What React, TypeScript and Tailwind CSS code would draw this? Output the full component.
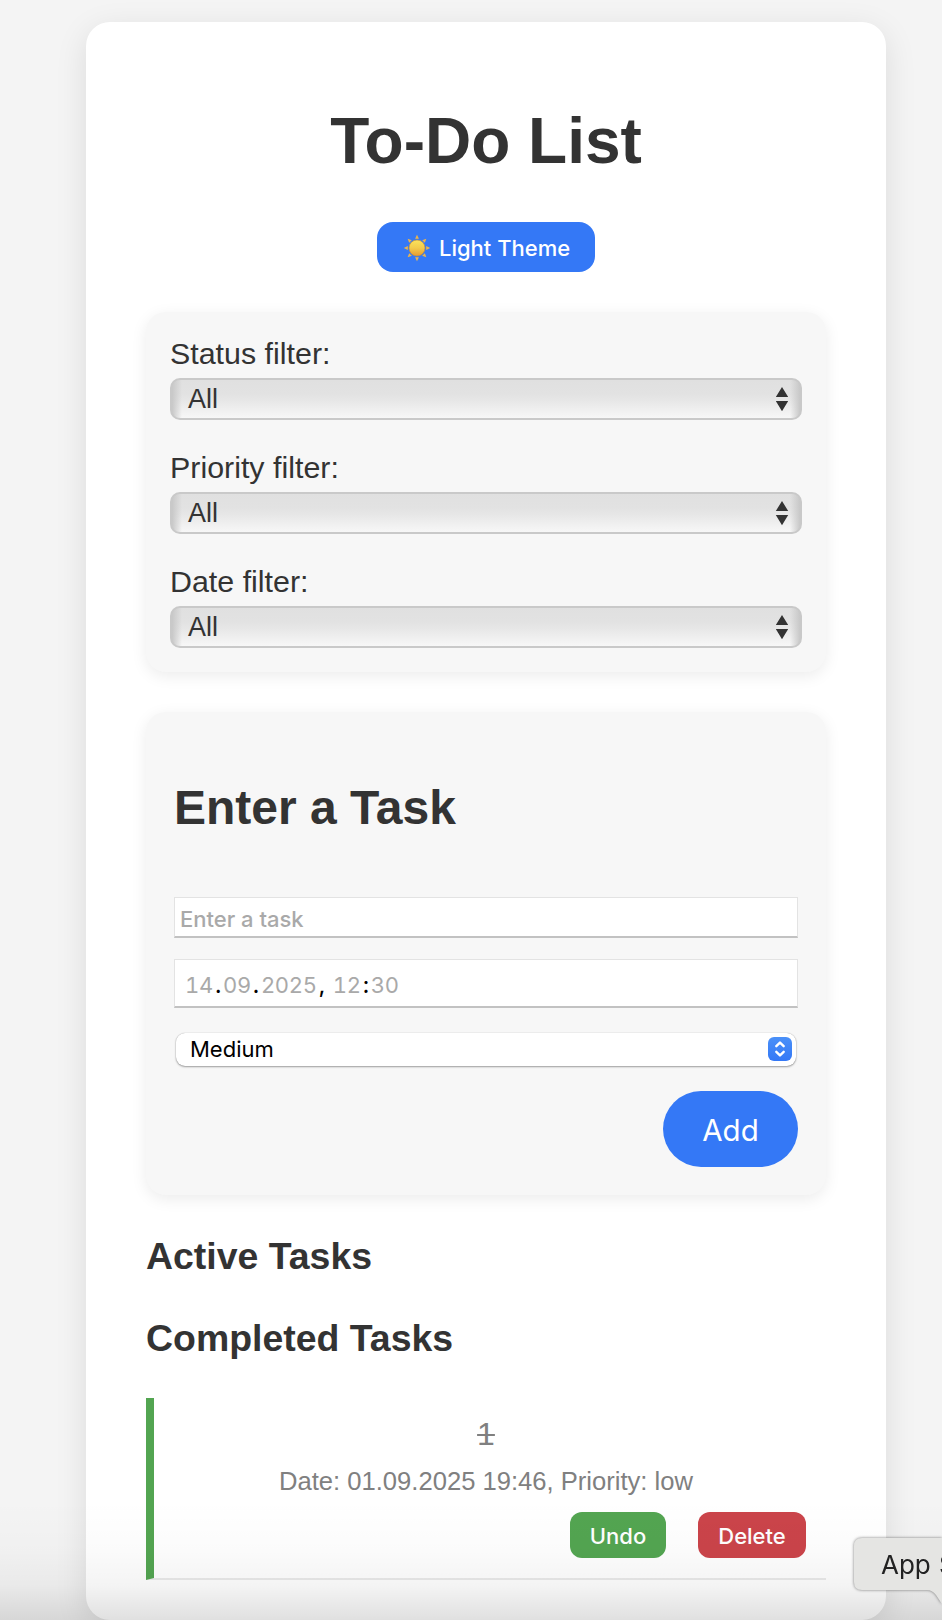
import React from "react";

const sans = "font-['Liberation_Sans',Arial,sans-serif]";
const ui = "font-['Inter',sans-serif]";

function Sun() {
  const rays = [0, 45, 90, 135, 180, 225, 270, 315];
  return (
    <svg className="mt-[2px] h-[28px] w-[28px]" viewBox="-14 -14 28 28">
      <defs>
        <linearGradient id="disc" x1="0" y1="0" x2="0" y2="1">
          <stop offset="0" stopColor="#fbe35c" />
          <stop offset="0.5" stopColor="#f3cb4b" />
          <stop offset="1" stopColor="#e69a32" />
        </linearGradient>
      </defs>
      {rays.map((a) => (
        <path key={a} d="M-1.9 -9.2L0 -13.2L1.9 -9.2Z" fill="#ecb44c" transform={`rotate(${a})`} />
      ))}
      <circle r="8" fill="url(#disc)" stroke="#c99136" strokeWidth="0.7" />
    </svg>
  );
}

function Filter({ label }: { label: string }) {
  return (
    <div>
      <div className="mb-[6px] h-[36px] text-[30.4px] leading-[34px]">{label}</div>
      <div className="flex h-[42px] items-center justify-between overflow-hidden rounded-[10px] border-2 border-[#c9c9c9] bg-[linear-gradient(90deg,#c8c8c8_0,#c8c8c800_10px,#c8c8c800_calc(100%-10px),#c8c8c8_100%),linear-gradient(180deg,#e0e0e0,#e2e2e2_35%,#e6e6e6_52%,#f7f7f7)] pr-[11px] pl-[16px] text-[27px] leading-[38px]">
        <span>All</span>
        <svg className="h-[26px] w-[14px]" viewBox="0 0 14 26" fill="#333">
          <path d="M7 1L13.2 11H0.8ZM7 25.2L0.8 15H13.2Z" />
        </svg>
      </div>
    </div>
  );
}

function Mark({ children }: { children: string }) {
  return <span className="inline-block w-[10px] text-center font-medium text-black">{children}</span>;
}

export default function App() {
  return (
    <div className={`${sans} relative h-[1620px] w-[942px] overflow-hidden bg-[#f4f4f4] pt-[22px] pl-[86px] text-[#333]`}>
      <main className="h-[1598px] w-[800px] rounded-[24px] bg-white px-[60px] pt-[82px] shadow-[0_8px_32px_rgba(0,0,0,0.1)]">
        <h1 className="h-[74px] text-center text-[64px] leading-[74px] font-bold">To-Do List</h1>

        <button className={`${ui} mx-auto mt-[44px] flex h-[50px] w-[218px] items-center rounded-[16px] bg-[#3478f6] pl-[26px] text-[22px] font-medium text-white`}>
          <Sun />
          <span className="ml-[8px] pt-[2px] whitespace-nowrap">Light Theme</span>
        </button>

        <section className="mt-[40px] flex h-[360px] flex-col gap-[30px] rounded-[20px] bg-[#f7f7f7] p-[24px] shadow-[0_4px_16px_rgba(0,0,0,0.08)]">
          <Filter label="Status filter:" />
          <Filter label="Priority filter:" />
          <Filter label="Date filter:" />
        </section>

        <section className="mt-[40px] flex h-[483px] flex-col rounded-[20px] bg-[#f7f7f7] px-[28px] pt-[69px] shadow-[0_4px_16px_rgba(0,0,0,0.08)]">
          <h2 className="h-[54px] text-[48px] leading-[54px] font-bold">Enter a Task</h2>
          <div className={`${ui} mt-[62px] flex h-[41px] items-center border border-b-2 border-[#e3e3e3] border-b-[#c2c2c2] bg-white pt-[4px] pl-[5px] text-[22px] font-medium text-[#a9a9a9]`}>
            <span>Enter a task</span>
          </div>
          <div className={`${ui} mt-[21px] flex h-[49px] items-center border border-b-2 border-[#e3e3e3] border-b-[#c2c2c2] bg-white pt-[5px] pl-[10px] text-[22px] tracking-[-0.3px] text-[#a9a9a9] tabular-nums`}>
            <span>14</span>
            <Mark>.</Mark>
            <span>09</span>
            <Mark>.</Mark>
            <span>2025</span>
            <Mark>,</Mark>
            <span className="ml-[6px]">12</span>
            <Mark>:</Mark>
            <span>30</span>
          </div>
          <div className={`${ui} mx-[2px] mt-[25px] flex h-[33px] items-center justify-between rounded-[9px] bg-white pr-[4px] pb-px pl-[14px] text-[22px] text-black shadow-[0_0_1px_rgba(0,0,0,0.3),0_1px_2px_rgba(0,0,0,0.35)]`}>
            <span className="pt-px">Medium</span>
            <svg className="h-[24px] w-[24px] rounded-[6px] bg-linear-to-b from-[#4a90f8] to-[#3478f6]" viewBox="0 0 24 24" fill="none" stroke="white" strokeWidth="2.4" strokeLinecap="round" strokeLinejoin="round">
              <path d="M8.3 9.2L12 5.6L15.7 9.2M8.3 14.8L12 18.4L15.7 14.8" />
            </svg>
          </div>
          <button className={`${ui} mt-[25px] h-[76px] w-[135px] self-end rounded-full bg-[#3478f6] pt-[2px] text-[29.5px] text-white`}>Add</button>
        </section>

        <h3 className="mt-[40px] h-[42px] text-[37.44px] leading-[42px] font-bold">Active Tasks</h3>
        <h3 className="mt-[40px] h-[42px] text-[37.44px] leading-[42px] font-bold">Completed Tasks</h3>

        <article className="mt-[39px] flex h-[182px] flex-col border-b-2 border-l-8 border-b-[#eaeaea] border-l-[#53a551] pr-[20px] pl-[12px] text-center text-[#808080]">
          <div className="mt-[18px] h-[36px] text-[32px] leading-[36px] line-through decoration-2">1</div>
          <div className="mt-[14px] h-[30px] text-[25.6px] leading-[30px]">Date: 01.09.2025 19:46, Priority: low</div>
          <div className={`${ui} mt-[16px] flex justify-end gap-[32px] text-[22px] font-medium text-white`}>
            <button className="h-[46px] w-[96px] rounded-[12px] bg-[#53a551] pt-[2px]">Undo</button>
            <button className="h-[46px] w-[108px] rounded-[12px] bg-[#cb444a] pt-[2px]">Delete</button>
          </div>
        </article>
      </main>

      <div className="pointer-events-none absolute inset-x-0 bottom-0 h-[120px] bg-[linear-gradient(180deg,transparent,rgba(0,0,0,0.014)_42%,rgba(0,0,0,0.045)_71%,rgba(0,0,0,0.12))]" />

      <div className="absolute top-[1538px] left-[854px] h-[82px] w-[88px] drop-shadow-[0_0_1.5px_rgba(0,0,0,0.5)]">
        <svg className="absolute inset-0 h-[82px] w-[88px]" viewBox="0 0 88 82" fill="#e5e5e3">
          <path d="M8 0H100V78H96L82 57Q78 52 73 52H8Q0 52 0 44V8Q0 0 8 0Z" />
        </svg>
        <span className={`${ui} relative block pt-px pl-[27px] text-[26px] leading-[52px] [word-spacing:1px] whitespace-nowrap text-[#222]`}>App S</span>
      </div>
    </div>
  );
}
